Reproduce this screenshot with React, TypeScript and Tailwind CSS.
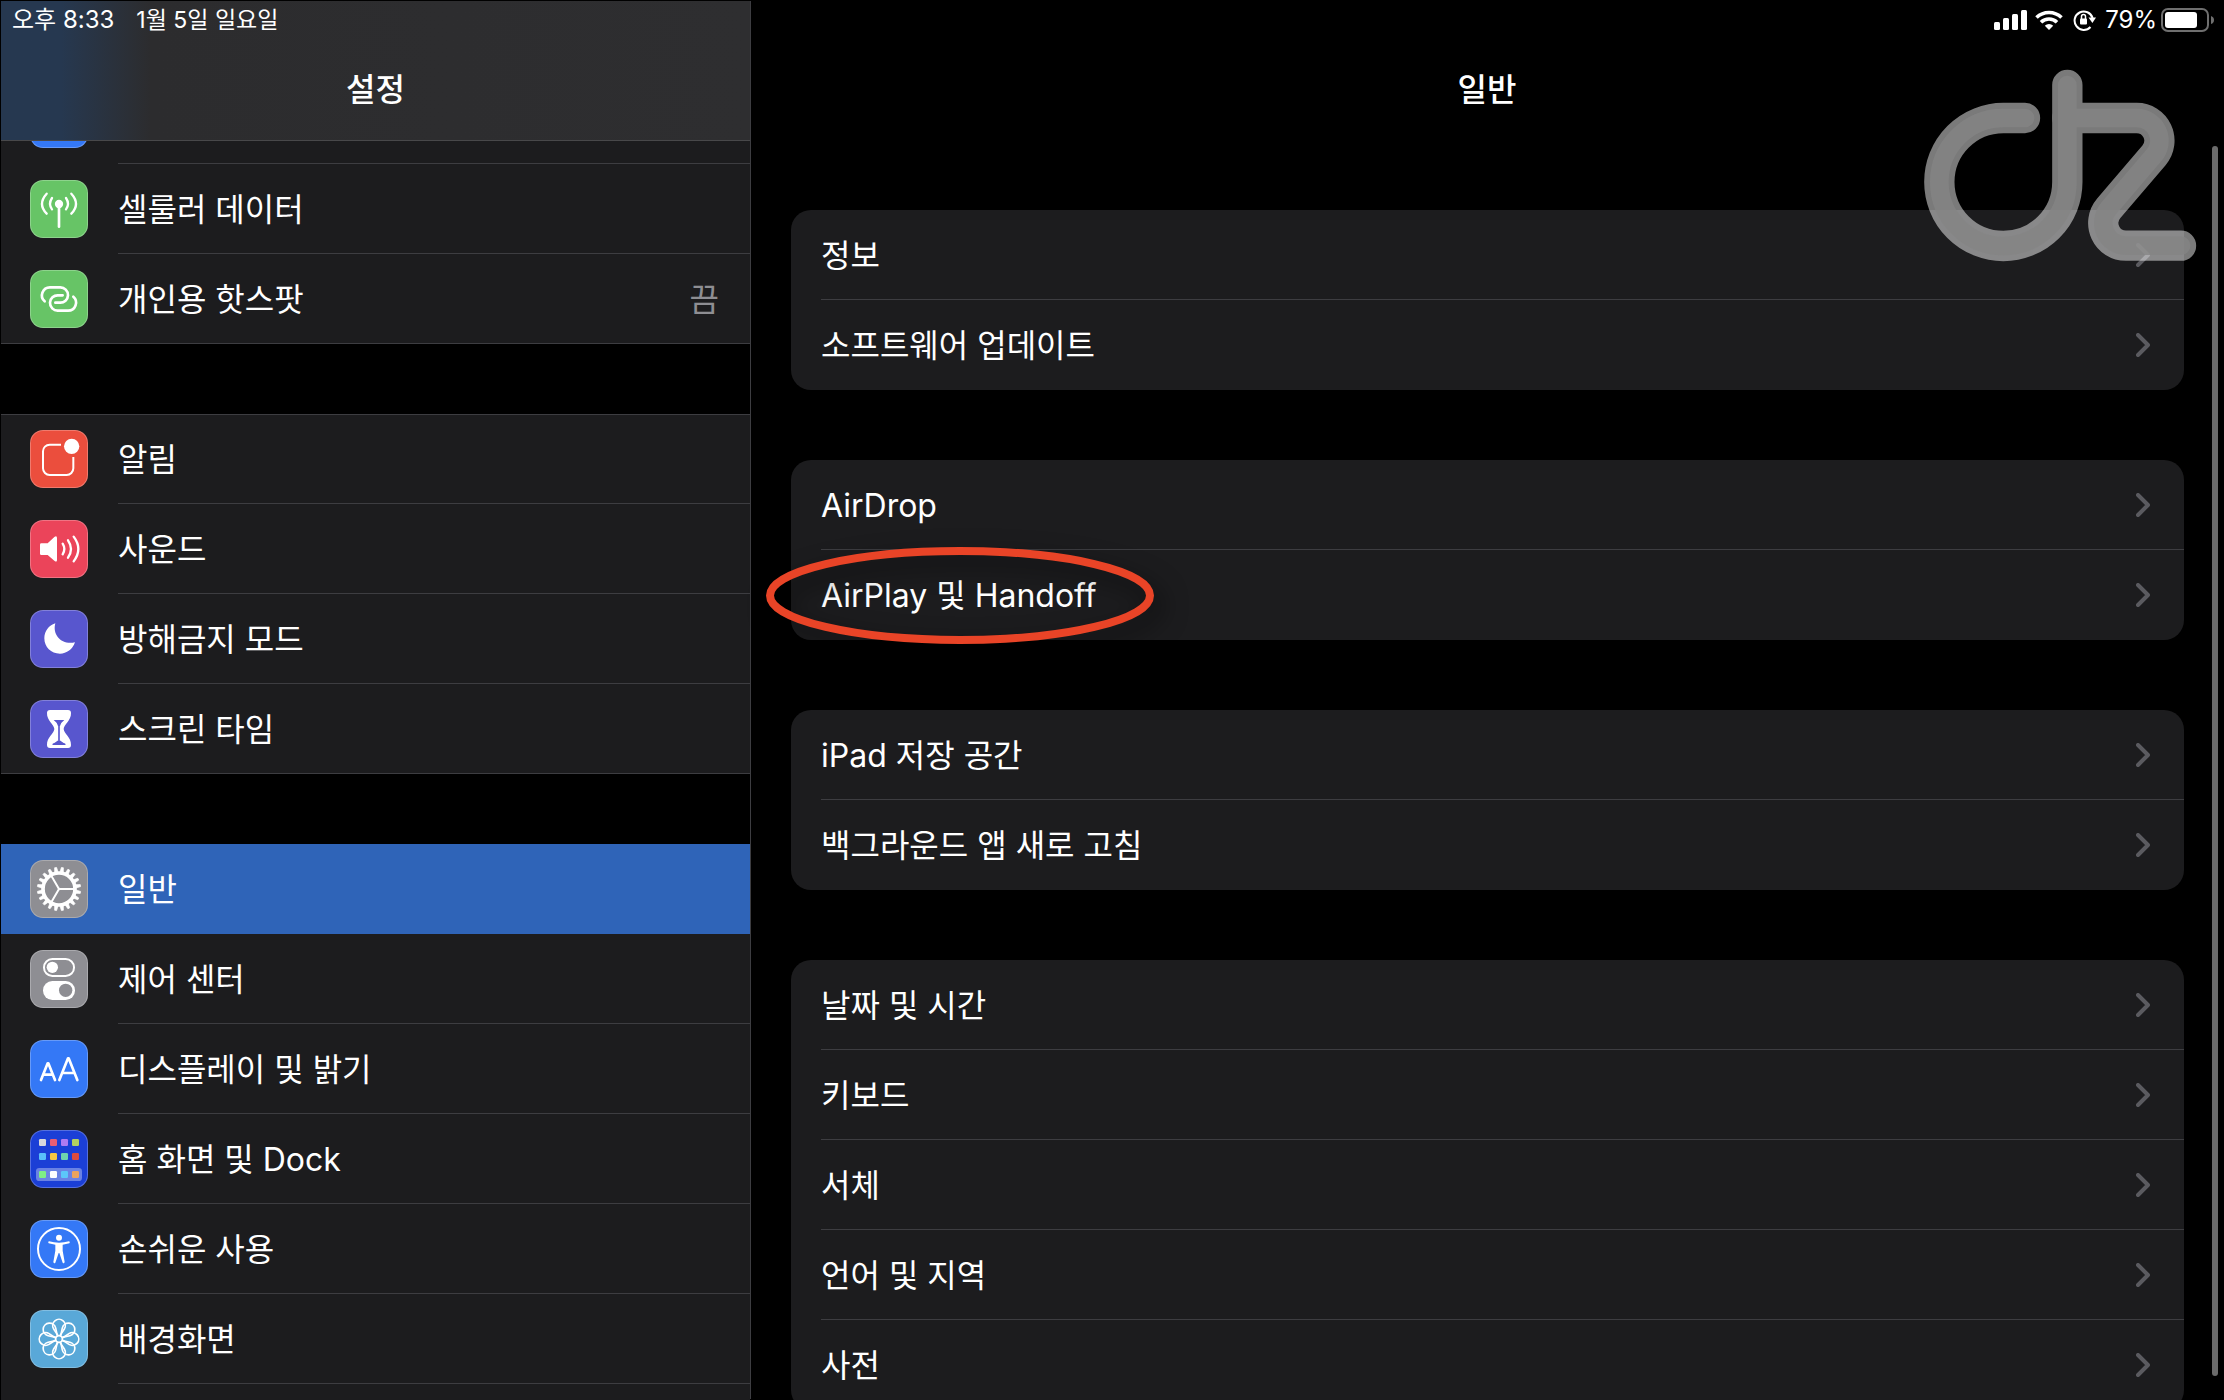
import type { ReactNode } from 'react';

type SidebarItem = {
  label: string;
  tint: string;
  icon: ReactNode;
  value?: string;
  active?: boolean;
};

/* Icon glyphs, all drawn on a 174 x 174 tile */

const CellularIcon = () => (
  <g fill="none" stroke="#fff" strokeWidth="7" strokeLinecap="round">
    <circle cx="87" cy="72" r="9" fill="#fff" />
    <path d="M87 72V140" strokeWidth="8" />
    <path d="M66 54Q54 72 66 88M108 54Q120 72 108 88" />
    <path d="M50 41Q22 72 50 101M124 41Q152 72 124 101" />
  </g>
);

const HotspotIcon = () => (
  <g fill="none" stroke="#fff" strokeWidth="8" strokeLinecap="round">
    <path d="M44 94A24 24 0 0 1 60 52H90a23 23 0 0 1 24 24a23 23 0 0 1-24 22H76" />
    <path d="M130 80A24 24 0 0 1 114 122H84a23 23 0 0 1-24-24a23 23 0 0 1 24-22H98" />
  </g>
);

const NotificationIcon = () => (
  <g>
    <path d="M93 44H59a20 20 0 0 0-20 20V115a20 20 0 0 0 20 20H110a20 20 0 0 0 20-20V81" fill="none" stroke="#fff" strokeWidth="6" />
    <circle cx="125" cy="49" r="23" fill="#fff" />
  </g>
);

const SoundIcon = () => (
  <g>
    <path d="M34 70H53L73 51Q81 46 81 54V120Q81 128 73 122L53 105H34Q30 105 30 101V74Q30 70 34 70Z" fill="#fff" />
    <path d="M98 71q10 16 0 32M114 61q18 26 0 52M131 50q28 37 0 74" fill="none" stroke="#fff" strokeWidth="7" strokeLinecap="round" />
  </g>
);

const MoonIcon = () => (
  <path d="M76 40C66 76 96 106 135 97C128 118 110 131 90 131C63 131 43 111 43 85C43 64 56 46 76 40Z" fill="#fff" />
);

const HourglassIcon = () => (
  <g>
    <path d="M60 30H114Q123 30 123 39C124 62 101 74 101 87C101 100 124 112 123 135Q123 144 114 144H60Q51 144 51 135C50 112 73 100 73 87C73 74 50 62 51 39Q51 30 60 30Z" fill="#fff" />
    <path d="M87 66V120" stroke="#5856ce" strokeWidth="5" />
    <path d="M71 60H103Q92 68 90 78H84Q82 68 71 60ZM67 135Q67 129 73 129L87 119L101 129Q107 129 107 135Z" fill="#5856ce" />
  </g>
);

const teeth = Array.from({ length: 20 }, (_, i) => i * 18 + 9);

const GearIcon = () => (
  <g fill="none" stroke="#fff">
    <circle cx="87" cy="87" r="48" strokeWidth="11" />
    {teeth.map((angle) => (
      <path key={angle} d="M82 36L84 22H90L92 36Z" fill="#fff" strokeWidth="2" transform={`rotate(${angle} 87 87)`} />
    ))}
    <path d="M87 87H134M87 87L63 46M87 87L63 128" strokeWidth="6" />
    <circle cx="87" cy="87" r="3" fill="#fff" />
  </g>
);

const TogglesIcon = () => (
  <g>
    <rect x="42" y="27" width="90" height="51" rx="25" fill="none" stroke="#fff" strokeWidth="6" />
    <circle cx="67" cy="52" r="17" fill="#fff" />
    <rect x="39" y="93" width="96" height="57" rx="28" fill="#fff" />
    <circle cx="107" cy="121" r="20" fill="#8e8e93" />
  </g>
);

const TextSizeIcon = () => (
  <g fill="none" stroke="#fff" strokeLinecap="round" strokeLinejoin="round">
    <path d="M33 120L53 70H55L75 120M40 104H68" strokeWidth="8" />
    <path d="M88 120L114 55H116L142 120M97 99H133" strokeWidth="8" />
  </g>
);

const homeApps = [
  ['#d8d8dc', '#e95e74', '#b07af2', '#b4d262'],
  ['#5ac0fa', '#f6c544', '#6fd3ae', '#dd4b3e'],
  ['#7fee86', '#ffffff', '#5cc6fa', '#eba35c'],
];

const HomeScreenIcon = () => (
  <g>
    <rect x="18" y="114" width="138" height="39" rx="10" fill="#fff" opacity=".35" />
    {homeApps.map((row, r) =>
      row.map((color, c) => (
        <rect key={color} x={27 + c * 33} y={[27, 69, 123][r]} width="21" height="21" rx="4" fill={color} />
      )),
    )}
  </g>
);

const AccessibilityIcon = () => (
  <g>
    <circle cx="87" cy="87" r="63" fill="none" stroke="#fff" strokeWidth="6" />
    <circle cx="87" cy="53" r="9" fill="#fff" />
    <path d="M57 64Q87 72 117 64Q122 66 118 70L98 74V92L104 126Q102 132 98 128L88 99H86L76 128Q72 132 70 126L76 92V74L56 70Q52 66 57 64Z" fill="#fff" />
  </g>
);

const petals = [0, 45, 90, 135, 180, 225, 270, 315];

const WallpaperIcon = () => (
  <g fill="none" stroke="#fff" strokeWidth="5">
    {petals.map((angle) => (
      <path key={angle} d="M84 77L71 57A19 19 0 1 1 103 57L90 77" transform={`rotate(${angle} 87 87)`} />
    ))}
    <circle cx="87" cy="87" r="10" />
  </g>
);

const sidebarGroups: SidebarItem[][] = [
  [
    { label: 'Bluetooth', tint: 'bg-[#3478f6]', icon: null },
    { label: '셀룰러 데이터', tint: 'bg-[#67c466]', icon: <CellularIcon /> },
    { label: '개인용 핫스팟', tint: 'bg-[#67c466]', icon: <HotspotIcon />, value: '끔' },
  ],
  [
    { label: '알림', tint: 'bg-[#eb4e3d]', icon: <NotificationIcon /> },
    { label: '사운드', tint: 'bg-[#eb445a]', icon: <SoundIcon /> },
    { label: '방해금지 모드', tint: 'bg-[#5856ce]', icon: <MoonIcon /> },
    { label: '스크린 타임', tint: 'bg-[#5856ce]', icon: <HourglassIcon /> },
  ],
  [
    { label: '일반', tint: 'bg-[#8e8e93]', icon: <GearIcon />, active: true },
    { label: '제어 센터', tint: 'bg-[#8e8e93]', icon: <TogglesIcon /> },
    { label: '디스플레이 및 밝기', tint: 'bg-[#3478f6]', icon: <TextSizeIcon /> },
    { label: '홈 화면 및 Dock', tint: 'bg-[#1b3fd6]', icon: <HomeScreenIcon /> },
    { label: '손쉬운 사용', tint: 'bg-[#3478f6]', icon: <AccessibilityIcon /> },
    { label: '배경화면', tint: 'bg-[#59a8d8]', icon: <WallpaperIcon /> },
    { label: '', tint: 'bg-[#59a8d8]', icon: null },
  ],
];

const detailGroups = [
  ['정보', '소프트웨어 업데이트'],
  ['AirDrop', 'AirPlay 및 Handoff'],
  ['iPad 저장 공간', '백그라운드 앱 새로 고침'],
  ['날짜 및 시간', '키보드', '서체', '언어 및 지역', '사전'],
];

function SidebarRow({ item, last }: { item: SidebarItem; last: boolean }) {
  const line = last || item.active ? 'border-transparent' : 'border-[#3d3d41]';
  return (
    <a href="#" className={`flex h-[90px] shrink-0 items-center gap-[30px] pl-[29px] ${item.active ? 'bg-[#2f64b8]' : ''}`}>
      <span className={`size-[58px] shrink-0 overflow-hidden rounded-[13px] border border-white/25 ${item.tint}`}>
        <svg viewBox="3 3 168 168" className="size-full">{item.icon}</svg>
      </span>
      <span className={`flex h-full flex-1 items-center justify-between border-b pt-[3px] pr-[31px] ${line}`}>
        <span>{item.label}</span>
        {item.value && <span className="text-[#8e8e93]">{item.value}</span>}
      </span>
    </a>
  );
}

function Sidebar() {
  return (
    <aside className="flex w-[750px] shrink-0 flex-col border-r border-[#3d3d41]">
      <header className="relative z-10 h-[140px] shrink-0 border-b border-[#48484a] bg-linear-to-r from-[#263850] from-8% via-[#2c2c2e] via-20% to-[#2e2e30]">
        <div className="flex h-[38px] items-center gap-[22px] pl-[11px]">
          <span className="text-[24px]">오후 8:33</span>
          <span className="text-[23px]">1월 5일 일요일</span>
        </div>
        <h1 className="flex h-[102px] items-center justify-center font-medium">설정</h1>
      </header>
      <nav className="-mt-[67px] flex flex-col gap-[70px]">
        {sidebarGroups.map((group, i) => (
          <div key={i} className="relative bg-[#1c1c1e]">
            {group.map((item, j) => (
              <SidebarRow key={j} item={item} last={j === group.length - 1} />
            ))}
            {i < 2 && <div className="pointer-events-none absolute inset-0 border-y border-[#3d3d41]" />}
          </div>
        ))}
      </nav>
    </aside>
  );
}

function StatusIcons() {
  return (
    <div className="flex h-[38px] items-center justify-end gap-2 pr-[9px]">
      {/* Signal */}
      <svg viewBox="0 0 33 20" className="h-5 w-[33px]" fill="#fff">
        <rect y="12" width="6" height="8" rx="1.5" />
        <rect x="9" y="8" width="6" height="12" rx="1.5" />
        <rect x="18" y="4" width="6" height="16" rx="1.5" />
        <rect x="27" width="6" height="20" rx="1.5" />
      </svg>
      {/* Wi-Fi */}
      <svg viewBox="0 0 28 20" className="h-5 w-7" fill="none" stroke="#fff" strokeWidth="3.6">
        <path d="M1.5 7.5a18 18 0 0 1 25 0M6 12.2a11.5 11.5 0 0 1 16 0" />
        <path d="M14 20L9.8 15.8a6 6 0 0 1 8.4 0Z" fill="#fff" stroke="none" />
      </svg>
      {/* Rotation lock */}
      <svg viewBox="0 0 24 22" className="ml-0.5 h-[22px] w-6" fill="none" stroke="#fff" strokeWidth="2">
        <path d="M17.5 18A9.2 9.2 0 1 1 19.6 9" />
        <path d="M15.5 8.500H23L19.4 14Z" fill="#fff" stroke="none" />
        <rect x="7" y="9.500" width="7" height="6" rx="1" fill="#fff" stroke="none" />
        <path d="M8.500 10V7.500a2 2 0 0 1 4 0V10" strokeWidth="1.500" />
      </svg>
      <span className="text-[24px]">79%</span>
      {/* Battery */}
      <svg viewBox="0 0 53 24" className="-ml-1 h-6 w-[53px]">
        <rect x="1" y="1" width="46" height="22" rx="6" fill="none" stroke="#6f6f6f" strokeWidth="2" />
        <rect x="4" y="4" width="32" height="16" rx="3" fill="#fff" />
        <path d="M50 8q3 1 3 4t-3 4Z" fill="#6f6f6f" />
      </svg>
    </div>
  );
}

function DetailRow({ label, last, marked }: { label: string; last: boolean; marked: boolean }) {
  return (
    <a href="#" className="relative block pl-[30px]">
      <span className={`flex h-[90px] items-center justify-between border-b pr-[34px] ${last ? 'border-transparent' : 'border-[#3d3d41]'}`}>
        <span className="pt-[3px]">{label}</span>
        <svg viewBox="0 0 14 24" className="h-6 w-3.5" fill="none" stroke="#5b5b60" strokeWidth="4" strokeLinecap="round" strokeLinejoin="round">
          <path d="M2 2L12 12L2 22" />
        </svg>
      </span>
      {/* Hand-drawn marker round the row label */}
      {marked && (
        <svg viewBox="0 0 388 97" className="pointer-events-none absolute top-[-3px] left-[-25px] h-[97px] w-[388px] overflow-visible drop-shadow-[8px_10px_12px_rgba(0,0,0,0.6)]">
          <ellipse cx="194" cy="48.500" rx="190" ry="44.500" fill="none" stroke="#e94427" strokeWidth="8" />
        </svg>
      )}
    </a>
  );
}

function DetailPane() {
  return (
    <main className="relative flex-1">
      <StatusIcons />
      <h2 className="flex h-[102px] items-center justify-center font-medium">일반</h2>
      <div className="mt-[69px] flex flex-col gap-[70px] pr-[39px] pl-10">
        {detailGroups.map((group, i) => (
          <div key={i} className="rounded-[20px] bg-[#1c1c1e]">
            {group.map((label, j) => (
              <DetailRow key={label} label={label} last={j === group.length - 1} marked={label.startsWith('AirPlay')} />
            ))}
          </div>
        ))}
      </div>

      {/* Scroll indicator */}
      <div className="absolute top-[145px] right-[5px] bottom-[23px] w-1.5 rounded-full bg-[#6b6b6b]" />

      {/* Watermark logo */}
      <svg viewBox="120 201 840 594" className="pointer-events-none absolute top-[66px] right-[23px] h-[198px] w-[280px]" fill="none" strokeLinecap="round" strokeLinejoin="round">
        <g stroke="#fff" strokeWidth="91" opacity=".48">
          <path d="M435 354H370A192 192 0 1 0 562 546V255" />
          <path d="M562 354H770A68 68 0 0 1 822 466L686 625A68 68 0 0 0 738 737H903" />
        </g>
        <g stroke="#858585" strokeWidth="56" opacity=".8">
          <path d="M435 354H370A192 192 0 1 0 562 546V255" />
          <path d="M562 354H770A68 68 0 0 1 822 466L686 625A68 68 0 0 0 738 737H903" />
        </g>
      </svg>
    </main>
  );
}

export default function App() {
  return (
    <div className="flex h-screen overflow-hidden bg-black p-px font-[Inter,'Noto_Sans_CJK_KR',sans-serif] text-[32px] leading-none text-white">
      <Sidebar />
      <DetailPane />
    </div>
  );
}
